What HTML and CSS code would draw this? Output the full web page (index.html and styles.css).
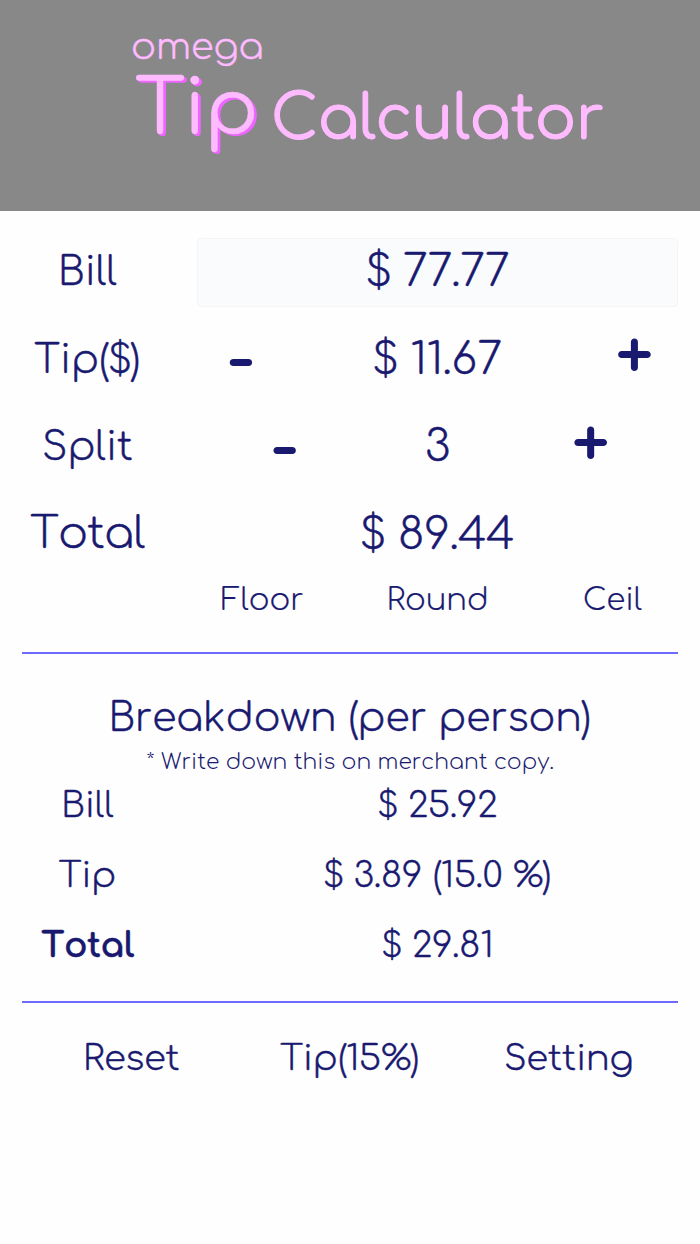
FILE: index.html
```html
<!DOCTYPE html>
<html lang="en">
<head>
  <meta charset="UTF-8">
  <meta name="viewport" content="width=device-width, initial-scale=1">
  <title>omega Tip Calculator</title>
  <link rel="stylesheet" href="styles.css">
</head>
<body>

  <header>
    <div class="brand">omega</div>
    <h1><span class="tip">Tip</span><span class="calc">Calculator</span></h1>
  </header>

  <main>
    <div class="row">
      <div class="label">Bill</div>
      <div class="bill-input"><span class="amount">$ 77.77</span></div>
    </div>
    <div class="row">
      <div class="label">Tip($)</div>
      <div class="stepper">
        <button class="minus">-</button>
        <span class="amount">$ 11.67</span>
        <button>+</button>
      </div>
    </div>
    <div class="row">
      <div class="label">Split</div>
      <div class="stepper narrow">
        <button class="minus">-</button>
        <span class="amount">3</span>
        <button>+</button>
      </div>
    </div>
    <div class="row sum">
      <div class="label">Total</div>
      <div class="amount">$ 89.44</div>
    </div>
    <div class="rounding">
      <button>Floor</button>
      <button>Round</button>
      <button>Ceil</button>
    </div>

    <hr>

    <h2>Breakdown (per person)</h2>
    <p class="note">* Write down this on merchant copy.</p>
    <div class="row small">
      <div class="label">Bill</div>
      <div class="value">$ 25.92</div>
    </div>
    <div class="row small">
      <div class="label">Tip</div>
      <div class="value">$ 3.89 (15.0 %)</div>
    </div>
    <div class="row small">
      <div class="label bold">Total</div>
      <div class="value">$ 29.81</div>
    </div>

    <hr>

    <nav>
      <button>Reset</button>
      <button>Tip(15%)</button>
      <button>Setting</button>
    </nav>
  </main>

</body>
</html>
```

FILE: styles.css
```css
* {
  margin: 0;
  padding: 0;
  box-sizing: border-box;
}
body {
  font-family: Comfortaa, Inter, sans-serif;
  font-weight: 300;
  font-kerning: none;
  -webkit-text-stroke: 0.45px;
  background: #fefefe;
  color: #191970;
}
button {
  font: inherit;
  font-kerning: inherit;
  color: inherit;
  background: none;
  border: none;
  cursor: pointer;
}
header {
  height: 210.5px;
  padding: 26px 0 0 131px;
  background: #888;
  color: #ffbbff;
}
.brand {
  font-size: 36.8px;
  line-height: 44px;
}
h1 {
  display: flex;
  align-items: flex-start;
  padding-top: 2px;
  font-weight: 400;
  line-height: 76px;
}
.tip {
  width: 140px;
  padding-left: 4px;
  font-size: 76.5px;
  letter-spacing: -1.3px;
  text-shadow: 1px 1px #ee66ff, 2px 2px #ee66ff, 3px 2px #ee66ff;
}
.calc {
  padding-top: 9px;
  font-size: 61.25px;
  letter-spacing: -0.4px;
  -webkit-text-stroke: 1px;
}
main {
  padding-top: 27.5px;
}
.row {
  display: grid;
  grid-template-columns: 175px 525px;
  height: 87.5px;
  line-height: 69px;
  text-align: center;
}
.label {
  font-size: 39.4px;
}
.amount {
  font-size: 43.75px;
  line-height: 68px;
}
.bill-input {
  height: 69px;
  margin: 0 22px;
  line-height: 66px;
  background: #f9fbfd;
  border: 1px solid #f3f5f7;
  border-radius: 4px;
}
.bill-input .amount {
  letter-spacing: -0.8px;
  line-height: 66px;
}
.stepper {
  display: grid;
  grid-template-columns: 131.25px 262.5px 131.25px;
}
.stepper.narrow {
  grid-template-columns: 218.75px 87.5px 218.75px;
}
.stepper button {
  height: 68px;
  padding-bottom: 5px;
  font-size: 69px;
  font-weight: 700;
  line-height: 40px;
  -webkit-text-stroke: 0;
}
.stepper .minus {
  padding-bottom: 1px;
}
.sum .label {
  font-size: 43.75px;
  line-height: 66px;
  letter-spacing: -0.6px;
}
.sum .amount {
  line-height: 67px;
}
.rounding {
  display: grid;
  grid-template-columns: repeat(3, 175px);
  height: 73px;
  margin: -9px 0 0 175px;
  font-size: 30.6px;
  line-height: 42px;
  align-items: start;
  -webkit-text-stroke: 0.2px;
}
hr {
  height: 2px;
  margin: 0 22px;
  border: none;
  background: #6b6bff;
}
h2 {
  margin-top: 38px;
  font-size: 39.4px;
  font-weight: 300;
  line-height: 52px;
  text-align: center;
}
.note {
  height: 27px;
  font-size: 21.9px;
  line-height: 36px;
  text-align: center;
  -webkit-text-stroke: 0;
}
.small {
  height: 70px;
  font-size: 35px;
}
.small .label {
  font-size: 35px;
}
.small .bold {
  font-weight: 700;
  letter-spacing: -0.5px;
}
.small + hr {
  margin-top: 20px;
}
nav {
  display: grid;
  grid-template-columns: repeat(3, 1fr);
  margin: 0 22px;
  padding-top: 27px;
  font-size: 35px;
  line-height: 58px;
}
```
